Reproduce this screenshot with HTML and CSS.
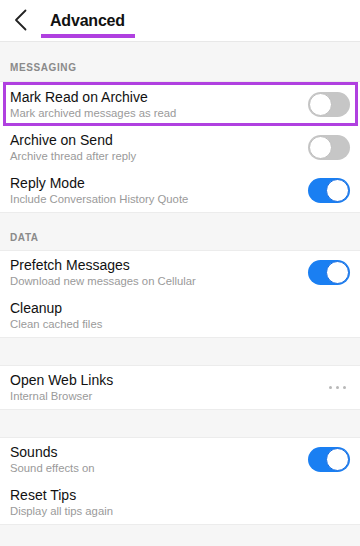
FILE: index.html
```html
<!DOCTYPE html>
<html>
<head>
<meta charset="utf-8">
<link rel="stylesheet" href="styles.css">
</head>
<body>
<div class="header">
  <svg class="back" width="14" height="22" viewBox="0 0 14 22"><path d="M11.5 1.5 L2 11 L11.5 20.5" fill="none" stroke="#222" stroke-width="1.8" stroke-linecap="round" stroke-linejoin="round"/></svg>
  <div class="title-wrap"><span class="title">Advanced</span></div>
</div>
<div class="section-label">MESSAGING</div>
<div class="group">
  <div class="row highlighted">
    <div class="text"><div class="t">Mark Read on Archive</div><div class="s">Mark archived messages as read</div></div>
    <div class="toggle"></div>
  </div>
  <div class="row">
    <div class="text"><div class="t">Archive on Send</div><div class="s">Archive thread after reply</div></div>
    <div class="toggle"></div>
  </div>
  <div class="row">
    <div class="text"><div class="t">Reply Mode</div><div class="s">Include Conversation History Quote</div></div>
    <div class="toggle on"></div>
  </div>
</div>
<div class="section-label second">DATA</div>
<div class="group">
  <div class="row">
    <div class="text"><div class="t">Prefetch Messages</div><div class="s">Download new messages on Cellular</div></div>
    <div class="toggle on"></div>
  </div>
  <div class="row">
    <div class="text"><div class="t">Cleanup</div><div class="s">Clean cached files</div></div>
  </div>
</div>
<div class="spacer"></div>
<div class="group">
  <div class="row">
    <div class="text"><div class="t">Open Web Links</div><div class="s">Internal Browser</div></div>
    <div class="dots"><span></span><span></span><span></span></div>
  </div>
</div>
<div class="spacer"></div>
<div class="group">
  <div class="row">
    <div class="text"><div class="t">Sounds</div><div class="s">Sound effects on</div></div>
    <div class="toggle on"></div>
  </div>
  <div class="row">
    <div class="text"><div class="t">Reset Tips</div><div class="s">Display all tips again</div></div>
  </div>
</div>
</body>
</html>
```
FILE: styles.css
```css
html, body {
  margin: 0;
  padding: 0;
  background: #f6f6f6;
  font-family: "Liberation Sans", Arial, sans-serif;
  width: 360px;
  height: 546px;
  overflow: hidden;
}
.header {
  height: 42px;
  background: #fff;
  border-bottom: 1px solid #e8e8e8;
  display: flex;
  align-items: center;
  padding-left: 14px;
  box-sizing: border-box;
}
.back {
  margin-top: -2px;
}
.title-wrap {
  margin-left: 13px;
  padding: 0 10px 0 9px;
  border-bottom: 4px solid #b040e0;
  height: 26px;
  display: flex;
  align-items: center;
  margin-top: 4px;
}
.title {
  font-size: 16px;
  font-weight: bold;
  color: #111;
  letter-spacing: -0.2px;
}
.section-label {
  height: 39px;
  box-sizing: border-box;
  padding: 20px 0 0 10px;
  font-size: 10px;
  font-weight: bold;
  color: #8a8a8a;
  letter-spacing: 0.6px;
}
.section-label.second {
  height: 37px;
  padding-top: 19px;
}
.group {
  background: #fff;
  border-top: 1px solid #ececec;
  border-bottom: 1px solid #ececec;
}
.row {
  height: 43px;
  display: flex;
  align-items: center;
  justify-content: space-between;
  padding: 0 10px;
  box-sizing: border-box;
}
.row.highlighted {
  margin: 0 2px 0 3px;
  border: 3px solid #b040e0;
  padding: 0 5px 0 4px;
  height: 44px;
}
.t {
  font-size: 14px;
  color: #111;
  line-height: 17px;
}
.s {
  font-size: 11.3px;
  color: #9a9a9a;
  line-height: 14px;
}
.toggle {
  width: 42px;
  height: 25px;
  border-radius: 13px;
  background: #c6c6c6;
  position: relative;
  box-sizing: border-box;
  flex: none;
}
.toggle::after {
  content: "";
  position: absolute;
  left: 1px;
  top: 1px;
  width: 23px;
  height: 23px;
  border-radius: 50%;
  background: #fff;
  box-sizing: border-box;
  border: 1px solid #bdbdbd;
}
.toggle.on {
  background: #1a7ff2;
}
.toggle.on::after {
  left: auto;
  right: 1px;
  border-color: #1a6ee0;
}
.dots {
  display: flex;
  gap: 3.5px;
  margin-right: 4px;
}
.dots span {
  width: 3.5px;
  height: 3.5px;
  border-radius: 50%;
  background: #b8b8b8;
}
.spacer {
  height: 27px;
}
```
